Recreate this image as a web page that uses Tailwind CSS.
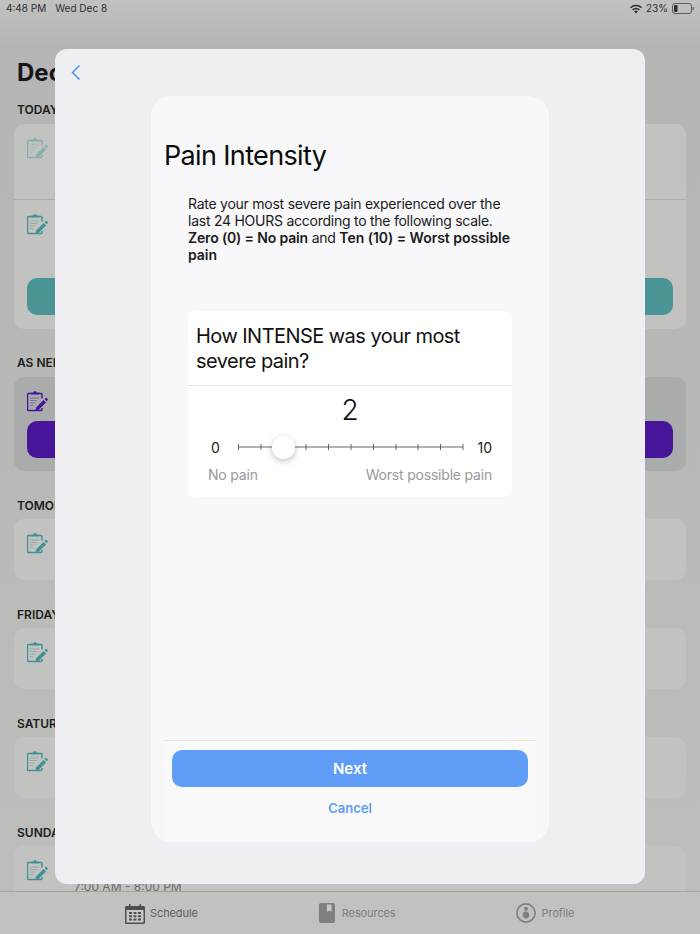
<!DOCTYPE html>
<html lang="en">
<head>
<meta charset="UTF-8">
<meta name="viewport" content="width=device-width, initial-scale=1.0">
<title>Pain Intensity</title>
<script src="https://cdn.jsdelivr.net/npm/@tailwindcss/browser@4"></script>
</head>
<body class="font-['Inter',sans-serif] bg-[#bcbebc]">

<svg class="hidden">
  <symbol id="task" viewBox="1 0 22 22">
    <path d="M5 3.500H2.500a1 1 0 0 0-1 1v15a1 1 0 0 0 1 1h12.500a1 1 0 0 0 1-1v-1.500M12.500 3.500H15a1 1 0 0 1 1 1v4" fill="none" stroke="currentColor" stroke-width="1.500"/>
    <path d="M5 4.500V2.600h2.400a1.600 1.600 0 0 1 3.200 0H13v1.900z" fill="currentColor"/>
    <path d="M4 8h9M4 10.500h7M4 13h5M4 15.500h3" stroke="currentColor" stroke-width="1.200" opacity=".4"/>
    <path d="M9.500 20.500l.8-3.300 7.300-7.300 2.500 2.500-7.300 7.300z" fill="currentColor"/>
    <path d="M18.500 9l1-1a.8.8 0 0 1 1.100 0l1 1.100a.8.8 0 0 1 0 1.100l-1 1z" fill="currentColor"/>
  </symbol>
</svg>

<div class="relative w-[700px] h-[934px] overflow-hidden flex flex-col bg-linear-to-b from-[#c0c2c0] via-[#b4b5b4] via-[5%] to-[#bdbfbc]">

  <!-- status bar -->
  <div class="h-[17px] px-[6px] flex items-center justify-between text-[10px] text-[#2e2f2e] shrink-0">
    <div class="flex gap-[9px]"><span>4:48 PM</span><span>Wed Dec 8</span></div>
    <div class="flex items-center gap-[4px]">
      <svg class="w-[12px] h-[10px]" viewBox="0 0 12 10"><path d="M0 3.200a8.500 8.500 0 0 1 12 0l-1 1.100a7 7 0 0 0-10 0zM2.100 5.400a5.500 5.500 0 0 1 7.800 0l-1.100 1.100a4 4 0 0 0-5.600 0zM4.200 7.500a2.500 2.500 0 0 1 3.600 0L6 9.400z" fill="#2e2f2e"/></svg>
      <span>23%</span>
      <svg class="w-[22px] h-[11px]" viewBox="0 0 22 11"><rect x=".5" y=".5" width="19" height="10" rx="2.500" fill="none" stroke="#5d5e5d"/><rect x="2" y="2" width="3.500" height="7" rx="1" fill="#2e2f2e"/><rect x="20.500" y="4" width="1.200" height="3" fill="#5d5e5d"/></svg>
    </div>
  </div>

  <!-- schedule behind the sheet -->
  <div class="flex-1 min-h-0 overflow-hidden px-[14px]">
    <h1 class="mt-[43px] ml-[3px] text-[24px] leading-[26px] font-bold text-[#141514]">December</h1>

    <h2 class="mt-[16px] ml-[3px] text-[12px] leading-[16px] font-semibold text-[#1b1c1b]">TODAY</h2>
    <div class="mt-[6px] h-[205px] rounded-[10px] bg-[#c2c3c0] flex flex-col">
      <div class="h-[76px] pt-[13px] px-[13px] border-b border-[#acadab] text-[#4c9a9b]"><svg class="w-[22px] h-[22px] opacity-50"><use href="#task"/></svg></div>
      <div class="flex-1 pt-[13px] px-[13px] flex flex-col text-[#3f9294]">
        <svg class="w-[22px] h-[22px]"><use href="#task"/></svg>
        <div class="mt-auto mb-[14px] h-[37px] rounded-[10px] bg-[#4a9495]"></div>
      </div>
    </div>

    <h2 class="mt-[26px] ml-[3px] text-[12px] leading-[16px] font-semibold text-[#1b1c1b]">AS NEEDED</h2>
    <div class="mt-[6px] h-[94px] rounded-[10px] bg-[#aaabab] pt-[13px] px-[13px] flex flex-col text-[#47159a]">
      <svg class="w-[22px] h-[22px]"><use href="#task"/></svg>
      <div class="mt-[9px] h-[37px] rounded-[10px] bg-[#47159a]"></div>
    </div>

    <h2 class="mt-[27px] ml-[3px] text-[12px] leading-[16px] font-semibold text-[#1b1c1b]">TOMORROW</h2>
    <div class="mt-[5px] h-[61px] rounded-[10px] bg-[#c2c3c0] pt-[13px] px-[13px] text-[#3f9294]"><svg class="w-[22px] h-[22px]"><use href="#task"/></svg></div>

    <h2 class="mt-[27px] ml-[3px] text-[12px] leading-[16px] font-semibold text-[#1b1c1b]">FRIDAY</h2>
    <div class="mt-[5px] h-[61px] rounded-[10px] bg-[#c2c3c0] pt-[13px] px-[13px] text-[#3f9294]"><svg class="w-[22px] h-[22px]"><use href="#task"/></svg></div>

    <h2 class="mt-[27px] ml-[3px] text-[12px] leading-[16px] font-semibold text-[#1b1c1b]">SATURDAY</h2>
    <div class="mt-[5px] h-[61px] rounded-[10px] bg-[#c2c3c0] pt-[13px] px-[13px] text-[#3f9294]"><svg class="w-[22px] h-[22px]"><use href="#task"/></svg></div>

    <h2 class="mt-[27px] ml-[3px] text-[12px] leading-[16px] font-semibold text-[#1b1c1b]">SUNDAY</h2>
    <div class="mt-[5px] h-[80px] rounded-[10px] bg-[#c2c3c0] pt-[13px] px-[13px] text-[#3f9294]">
      <svg class="w-[22px] h-[22px]"><use href="#task"/></svg>
      <p class="ml-[47px] mt-[-1px] text-[12px] leading-[14px] text-[#6b6c6a]">7:00 AM - 8:00 PM</p>
    </div>
  </div>

  <!-- tab bar -->
  <div class="h-[43px] shrink-0 border-t border-[#a3a49f] bg-[#c1c2be] flex items-center text-[11px] tracking-[-0.1px] text-[#7d7e7c]">
    <div class="ml-[125px] flex items-center gap-[5px] text-[#5e5f5e]">
      <svg class="w-[20px] h-[21px]" viewBox="0 0 20 21"><path d="M1.500 3H4V1h1.500v2h9V1H16v2h2.500A1.500 1.500 0 0 1 20 4.500v15a1.500 1.500 0 0 1-1.500 1.500h-17A1.500 1.500 0 0 1 0 19.500v-15A1.500 1.500 0 0 1 1.500 3z" fill="#4d4e4d"/><rect x="1.500" y="7" width="17" height="12.500" fill="#c8c9c6"/><path d="M4 9h3v2H4zM8.500 9h3v2h-3zM13 9h3v2h-3zM4 12.200h3v2H4zM8.500 12.200h3v2h-3zM13 12.200h3v2h-3zM4 15.400h3v2H4zM8.500 15.400h3v2h-3zM13 15.400h3v2h-3z" fill="#4d4e4d"/></svg>
      <span>Schedule</span>
    </div>
    <div class="ml-[121px] flex items-center gap-[7px]">
      <svg class="w-[16px] h-[20px]" viewBox="0 0 16 20"><path d="M2 0h12a2 2 0 0 1 2 2v16a2 2 0 0 1-2 2H2a2 2 0 0 1-2-2V2a2 2 0 0 1 2-2z" fill="#7f807e"/><path d="M8 1.500h4.500V9l-2.200-1.500L8 9z" fill="#c8c9c6"/></svg>
      <span>Resources</span>
    </div>
    <div class="ml-[120px] flex items-center gap-[6px]">
      <svg class="w-[20px] h-[20px]" viewBox="0 0 20 20"><circle cx="10" cy="10" r="9.100" fill="none" stroke="#7f807e" stroke-width="1.600"/><circle cx="10" cy="5.800" r="2" fill="#7f807e"/><path d="M10 8.500c2.200 0 3.200 1.500 3.200 3.500 0 1.700-1 3.500-3.200 3.500S6.800 13.700 6.800 12c0-2 1-3.500 3.200-3.500z" fill="#7f807e"/></svg>
      <span>Profile</span>
    </div>
  </div>

  <!-- modal sheet -->
  <div class="absolute left-[55px] top-[49px] w-[590px] h-[835px] rounded-[12px] bg-[#eeeef3]">
    <svg class="absolute left-[15px] top-[15px] w-[12px] h-[17px]" viewBox="0 0 12 17"><path d="M9.500 1.500L2.500 8.500l7 7" fill="none" stroke="#3f8df5" stroke-width="1.400"/></svg>

    <div class="absolute left-[96px] top-[47px] w-[398px] h-[746px] rounded-[20px] bg-[#f8f8fb] flex flex-col overflow-hidden">
      <div class="flex-1 min-h-0 px-[13px]">
        <h2 class="mt-[42px] text-[27px] leading-[36px] tracking-[-0.65px] text-[#0b0b0b] font-normal">Pain Intensity</h2>
        <p class="mt-[21px] ml-[24px] w-[330px] text-[14px] leading-[17px] tracking-[-0.25px] text-[#1a1a1a]">Rate your most severe pain experienced over the last 24 HOURS according to the following scale. <strong class="font-semibold tracking-[-0.15px]">Zero (0) = No pain</strong> and <strong class="font-semibold tracking-[-0.03px]">Ten (10) = Worst possible pain</strong></p>

        <div class="mt-[48px] ml-[24px] w-[324px] h-[186px] rounded-[8px] bg-white flex flex-col">
          <div class="h-[75px] border-b border-[#e4e4e6] px-[8px] pt-[13px] text-[20px] leading-[25px] tracking-[-0.55px] text-[#111]">How INTENSE was your most severe pain?</div>
          <div class="flex-1 px-[20px]">
            <div class="pt-[6px] text-center text-[28px] leading-[36px] font-light text-[#111]">2</div>
            <div class="mt-[7px] flex items-center h-[24px] text-[14px] text-[#222]">
              <span class="w-[30px] pl-[3px]">0</span>
              <div class="relative w-[226px] h-[24px]">
                <svg class="absolute left-0 top-0 w-[226px] h-[24px]" viewBox="0 0 226 24"><path d="M.5 12H225M.5 9v6M23 9v6M45.500 9v6M68 9v6M90.500 9v6M113 9v6M135.500 9v6M158 9v6M180 9v6M202.500 9v6M225 9v6" stroke="#666" stroke-width="1" fill="none"/></svg>
                <div class="absolute left-[34px] top-[1px] w-[23px] h-[23px] rounded-full bg-white shadow-[0_2px_6px_rgba(0,0,0,0.25)]"></div>
              </div>
              <span class="ml-auto">10</span>
            </div>
            <div class="mt-[6px] flex justify-between text-[14px] leading-[20px] tracking-[-0.2px] text-[#98989c]"><span>No pain</span><span>Worst possible pain</span></div>
          </div>
        </div>
      </div>

      <div class="h-[102px] shrink-0 mx-[13px] border-t border-[#e6e6e9] bg-[#f9f9f9] px-[8px] pt-[9px]">
        <button class="w-full h-[37px] rounded-[10px] bg-[#5f9df7] text-white text-[15px] font-semibold pt-[1px]">Next</button>
        <div class="mt-[12px] text-center text-[13px] leading-[18px] font-semibold text-[#5f9df7]">Cancel</div>
      </div>
    </div>
  </div>
</div>
</body>
</html>
